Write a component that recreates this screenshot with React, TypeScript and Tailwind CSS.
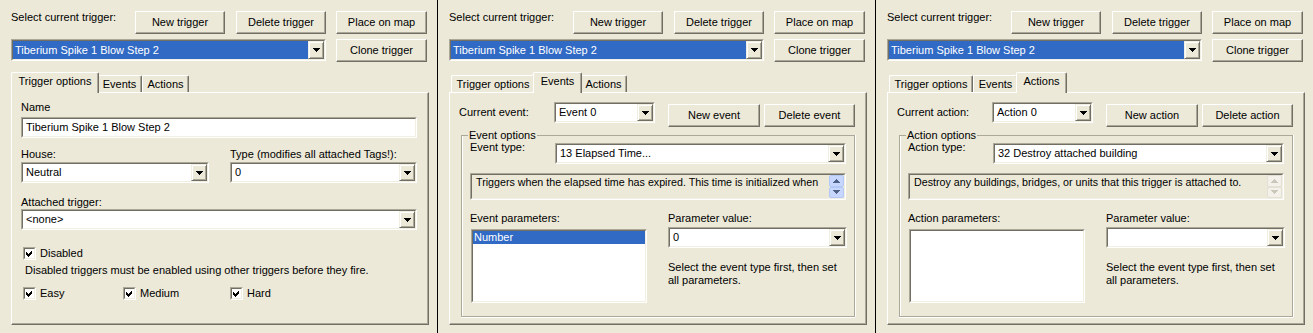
import React from "react";

const raised =
  "border border-t-white border-l-white border-b-[#716F64] border-r-[#716F64] shadow-[inset_-1px_-1px_0_#ACA899] bg-[#ECE9D8]";
const sunkenOuter = "border border-t-[#ACA899] border-l-[#ACA899] border-b-white border-r-white";
const sunkenInner = "border border-t-[#716F64] border-l-[#716F64] border-b-[#F1EFE2] border-r-[#F1EFE2]";

const Btn = ({ className = "", children }: { className?: string; children: React.ReactNode }) => (
  <div className={`flex h-[23px] shrink-0 items-center justify-center ${raised} ${className}`}>{children}</div>
);

const DownArrow = () => (
  <svg width="7" height="4" viewBox="0 0 7 4" shapeRendering="crispEdges">
    <polygon points="0,0 7,0 3.5,4" fill="black" />
  </svg>
);

const Combo = ({ className = "", text = "", selected = false }: { className?: string; text?: string; selected?: boolean }) => (
  <div className={`flex shrink-0 ${sunkenOuter} ${className}`}>
    <div className={`flex min-w-0 flex-1 bg-white ${sunkenInner}`}>
      <div className="flex min-w-0 flex-1 items-center">
        {selected ? (
          <div className="flex h-full flex-1 items-center bg-[#316AC5] pl-[2px] text-white">{text}</div>
        ) : (
          <div className="pl-[3px]">{text}</div>
        )}
      </div>
      <div className="flex w-[16px] items-center justify-center border border-t-[#F1EFE2] border-l-[#F1EFE2] border-b-[#716F64] border-r-[#716F64] bg-[#ECE9D8] shadow-[inset_1px_1px_0_white,inset_-1px_-1px_0_#ACA899]">
        <DownArrow />
      </div>
    </div>
  </div>
);

const Check = ({ label, className = "" }: { label: string; className?: string }) => (
  <div className={`flex items-center ${className}`}>
    <div className={`h-[13px] w-[13px] shrink-0 ${sunkenOuter}`}>
      <div className={`flex h-full w-full items-center justify-center bg-white ${sunkenInner}`}>
        <svg width="7" height="7" viewBox="0 0 7 7" shapeRendering="crispEdges">
          <polygon points="0,2 2,4 6,0 6,3 2,7 0,5" fill="black" />
        </svg>
      </div>
    </div>
    <span className="ml-[4px]">{label}</span>
  </div>
);

const ScrollBtn = ({ up, enabled }: { up: boolean; enabled: boolean }) => (
  <div
    className={`flex h-[12px] w-[15px] items-center justify-center rounded-[2px] border ${
      enabled ? "border-[#B4C8F6] bg-[#C6D6FC]" : "border-[#E3E1D6] bg-[#F3F1EA]"
    }`}
  >
    <svg width="7" height="4" viewBox="0 0 7 4" shapeRendering="crispEdges">
      <polygon points={up ? "0,4 7,4 3.5,0" : "0,0 7,0 3.5,4"} fill={enabled ? "#4D6185" : "#C9C7BA"} />
    </svg>
  </div>
);

const Header = () => (
  <div className="flex flex-col">
    <div className="flex">
      <div className="w-[124px] shrink-0">Select current trigger:</div>
      <Btn className="w-[90px]">New trigger</Btn>
      <Btn className="ml-[11px] w-[90px]">Delete trigger</Btn>
      <Btn className="ml-[10px] w-[91px]">Place on map</Btn>
    </div>
    <div className="mt-[5px] flex">
      <Combo className="h-[22px] w-[315px]" text="Tiberium Spike 1 Blow Step 2" selected />
      <Btn className="ml-[10px] w-[91px]">Clone trigger</Btn>
    </div>
  </div>
);

const TABS = [
  { name: "Trigger options", w: "w-[84px]", sw: "w-[88px]" },
  { name: "Events", w: "w-[45px]", sw: "w-[49px]" },
  { name: "Actions", w: "w-[47px]", sw: "w-[51px]" },
];

const Tabs = ({ active }: { active: number }) => (
  <div className="mt-[10px] flex h-[20px] items-end pl-[2px]">
    {TABS.map((t, i) =>
      i === active ? (
        <div
          key={t.name}
          className={`relative z-10 -mx-[2px] mb-[-1px] flex h-[21px] shrink-0 justify-center rounded-t-[2px] border border-b-0 border-t-white border-l-white border-r-[#716F64] bg-[#ECE9D8] pt-[2px] shadow-[inset_-1px_0_0_#ACA899] ${t.sw}`}
        >
          {t.name}
        </div>
      ) : (
        <div
          key={t.name}
          className={`flex h-[17px] shrink-0 justify-center rounded-t-[2px] border border-b-0 border-t-white border-l-white border-r-[#716F64] pt-[2px] shadow-[inset_-1px_0_0_#ACA899] ${t.w}`}
        >
          {t.name}
        </div>
      )
    )}
  </div>
);

const TabPanel = ({ children }: { children: React.ReactNode }) => (
  <div className="h-[233px] w-[418px] border border-t-white border-l-white border-b-[#716F64] border-r-[#716F64] shadow-[inset_-1px_-1px_0_#ACA899]">
    {children}
  </div>
);

const TriggerOptions = () => (
  <div className="flex flex-col pl-[9px] pt-[8px]">
    <div>Name</div>
    <div className={`mt-[3px] h-[21px] w-[396px] ${sunkenOuter}`}>
      <div className={`flex h-full items-center bg-white pl-[3px] ${sunkenInner}`}>Tiberium Spike 1 Blow Step 2</div>
    </div>
    <div className="mt-[10px] flex">
      <div className="flex w-[188px] flex-col">
        <div>House:</div>
        <Combo className="mt-[1px] h-[21px] w-[188px]" text="Neutral" />
      </div>
      <div className="ml-[21px] flex w-[187px] flex-col">
        <div>Type (modifies all attached Tags!):</div>
        <Combo className="mt-[1px] h-[21px] w-[187px]" text="0" />
      </div>
    </div>
    <div className="mt-[13px]">Attached trigger:</div>
    <Combo className="h-[21px] w-[396px]" text="<none>" />
    <Check className="ml-[2px] mt-[17px]" label="Disabled" />
    <div className="ml-[4px] mt-[4px]">Disabled triggers must be enabled using other triggers before they fire.</div>
    <div className="ml-[2px] mt-[10px] flex">
      <Check className="w-[100px]" label="Easy" />
      <Check className="w-[107px]" label="Medium" />
      <Check label="Hard" />
    </div>
  </div>
);

interface ListProps {
  current: string;
  currentValue: string;
  newLabel: string;
  deleteLabel: string;
  group: string;
  typeLabel: string;
  typeValue: string;
  description: string;
  scrollEnabled: boolean;
  paramsLabel: string;
  item?: string;
  paramValue: string;
}

const ListTab = (p: ListProps) => (
  <div className="flex flex-col pl-[9px] pt-[9px]">
    <div className="flex items-start">
      <div className="w-[95px] shrink-0 pt-[4px]">{p.current}</div>
      <Combo className="h-[21px] w-[101px]" text={p.currentValue} />
      <Btn className="ml-[13px] mt-[2px] w-[92px]">{p.newLabel}</Btn>
      <Btn className="ml-[4px] mt-[2px] w-[91px]">{p.deleteLabel}</Btn>
    </div>
    <fieldset className="ml-[2px] mt-[2px] h-[188px] w-[394px] border border-[#ACA899] shadow-[inset_1px_0_0_white,1px_0_0_white,0_1px_0_white]">
      <legend className="ml-[6px] px-[1px] leading-[12px]">{p.group}</legend>
      <div className="flex flex-col pl-[8px]">
        <div className="flex items-start">
          <div className="w-[85px] shrink-0">{p.typeLabel}</div>
          <Combo className="mt-[2px] h-[21px] w-[291px]" text={p.typeValue} />
        </div>
        <div className={`mt-[9px] h-[27px] w-[376px] ${sunkenOuter}`}>
          <div className={`flex h-full ${sunkenInner}`}>
            <div className="min-w-0 flex-1 whitespace-nowrap pl-[4px] pt-[1px] text-[10.7px]">{p.description}</div>
            <div className="flex flex-col">
              <ScrollBtn up enabled={p.scrollEnabled} />
              <ScrollBtn up={false} enabled={p.scrollEnabled} />
            </div>
          </div>
        </div>
        <div className="mt-[12px] flex">
          <div className="flex w-[198px] shrink-0 flex-col">
            <div>{p.paramsLabel}</div>
            <div className={`ml-[1px] mt-[4px] h-[74px] w-[176px] ${sunkenOuter}`}>
              <div className={`h-full bg-white ${sunkenInner}`}>
                {p.item && <div className="bg-[#316AC5] pl-[1px] text-white">{p.item}</div>}
              </div>
            </div>
          </div>
          <div className="flex flex-col">
            <div>Parameter value:</div>
            <Combo className="mt-[2px] h-[21px] w-[179px]" text={p.paramValue} />
            <div className="mt-[13px]">
              Select the event type first, then set
              <br />
              all parameters.
            </div>
          </div>
        </div>
      </div>
    </fieldset>
  </div>
);

const Panel = ({ active, children }: { active: number; children: React.ReactNode }) => (
  <div className="flex w-[437px] shrink-0 flex-col pl-[11px] pt-[11px]">
    <Header />
    <Tabs active={active} />
    <TabPanel>{children}</TabPanel>
  </div>
);

export default function App() {
  return (
    <div className="flex h-[333px] w-[1313px] overflow-hidden bg-[#ECE9D8] font-['Liberation_Sans',Arial,sans-serif] text-[11px] leading-[13px] text-black">
      <Panel active={0}>
        <TriggerOptions />
      </Panel>
      <div className="w-px shrink-0 bg-black" />
      <Panel active={1}>
        <ListTab
          current="Current event:"
          currentValue="Event 0"
          newLabel="New event"
          deleteLabel="Delete event"
          group="Event options"
          typeLabel="Event type:"
          typeValue="13 Elapsed Time..."
          description="Triggers when the elapsed time has expired. This time is initialized when"
          scrollEnabled
          paramsLabel="Event parameters:"
          item="Number"
          paramValue="0"
        />
      </Panel>
      <div className="w-px shrink-0 bg-black" />
      <Panel active={2}>
        <ListTab
          current="Current action:"
          currentValue="Action 0"
          newLabel="New action"
          deleteLabel="Delete action"
          group="Action options"
          typeLabel="Action type:"
          typeValue="32 Destroy attached building"
          description="Destroy any buildings, bridges, or units that this trigger is attached to."
          scrollEnabled={false}
          paramsLabel="Action parameters:"
          paramValue=""
        />
      </Panel>
    </div>
  );
}
